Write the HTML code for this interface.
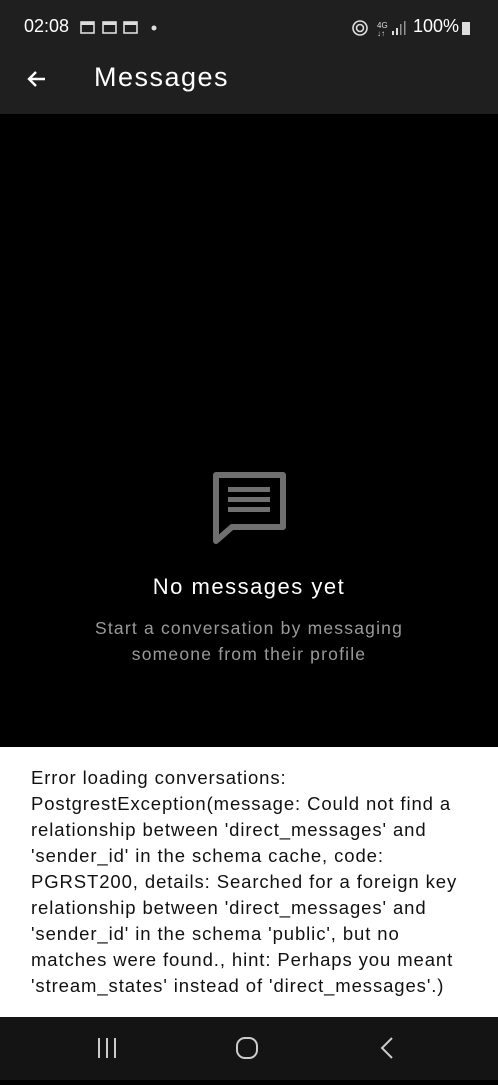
<!DOCTYPE html>
<html><head><meta charset="utf-8"><style>
body{margin:0;width:498px;height:1080px;background:#000;font-family:"Liberation Sans",sans-serif;position:relative;overflow:hidden}
.hdr{position:absolute;left:0;top:0;width:498px;height:114px;background:#1f1f1f;color:#fff}
.t{position:absolute;font-size:18px;top:16px}
.title{position:absolute;left:94px;top:62px;font-size:27px;letter-spacing:1.5px;color:#fff}
.c{position:absolute;width:498px;text-align:center}
.err{position:absolute;left:0;top:747px;width:498px;height:270px;background:#fff}
.err div{position:absolute;left:31px;top:18px;font-size:18.5px;line-height:26px;color:#111;white-space:nowrap;letter-spacing:0.9px}
.nav{position:absolute;left:0;top:1017px;width:498px;height:63px;background:#141414}
</style></head><body>
<div class="hdr">
 <div class="t" style="left:24px">02:08</div>
 <svg style="position:absolute;left:80px;top:20px" width="80" height="16"><g fill="none" stroke="#ddd" stroke-width="1.6"><rect x="1" y="2" width="13" height="11"/><rect x="23" y="2" width="13" height="11"/><rect x="44" y="2" width="13" height="11"/></g><g fill="#ddd"><rect x="1" y="2" width="13" height="3"/><rect x="23" y="2" width="13" height="3"/><rect x="44" y="2" width="13" height="3"/><circle cx="74" cy="8" r="2.5"/></g></svg>
 <svg style="position:absolute;left:350px;top:18px" width="125" height="20"><g fill="none" stroke="#ddd" stroke-width="1.6"><circle cx="10" cy="10" r="7"/><circle cx="10" cy="10" r="3.5"/></g><text x="27" y="10" font-size="8" fill="#ddd" font-family="Liberation Sans">4G</text><text x="27" y="18" font-size="8" fill="#ddd">↓↑</text><g fill="#ddd"><rect x="42" y="13" width="2" height="4"/><rect x="46" y="10" width="2" height="7"/><rect x="50" y="6" width="1.5" height="11" opacity=".6"/><rect x="54" y="3" width="1.5" height="14" opacity=".6"/></g><rect x="112" y="4" width="8" height="13" fill="#ddd"/></svg>
 <div class="t" style="left:413px">100%</div>
 <svg style="position:absolute;left:24px;top:67px" width="24" height="24"><path d="M21 12H5M12 5l-7 7 7 7" fill="none" stroke="#fff" stroke-width="2.4"/></svg>
 <div class="title">Messages</div>
</div>
<svg style="position:absolute;left:210px;top:470px" width="80" height="76"><path d="M6 5h67v52H22L6 71Z" fill="none" stroke="#6f6f6f" stroke-width="6" stroke-linejoin="round"/><g fill="#6f6f6f"><rect x="18" y="17" width="42" height="5"/><rect x="18" y="27" width="42" height="5"/><rect x="18" y="37" width="42" height="5"/></g></svg>
<div class="c" style="top:574px;font-size:22px;letter-spacing:1.5px;color:#fff">No messages yet</div>
<div class="c" style="top:615px;font-size:17.5px;line-height:26px;letter-spacing:1.2px;color:#9a9a9a">Start a conversation by messaging<br>someone from their profile</div>
<div class="err"><div>Error loading conversations:<br>PostgrestException(message: Could not find a<br>relationship between 'direct_messages' and<br>'sender_id' in the schema cache, code:<br>PGRST200, details: Searched for a foreign key<br>relationship between 'direct_messages' and<br>'sender_id' in the schema 'public', but no<br>matches were found., hint: Perhaps you meant<br>'stream_states' instead of 'direct_messages'.)</div></div>
<div class="nav"><svg width="498" height="63"><g fill="none" stroke="#ccc" stroke-width="2"><path d="M99 21v20M107 21v20M115 21v20"/><rect x="237" y="21" width="20" height="20" rx="8"/><path d="M392 21l-10 10 10 10"/></g></svg></div>
</body></html>
